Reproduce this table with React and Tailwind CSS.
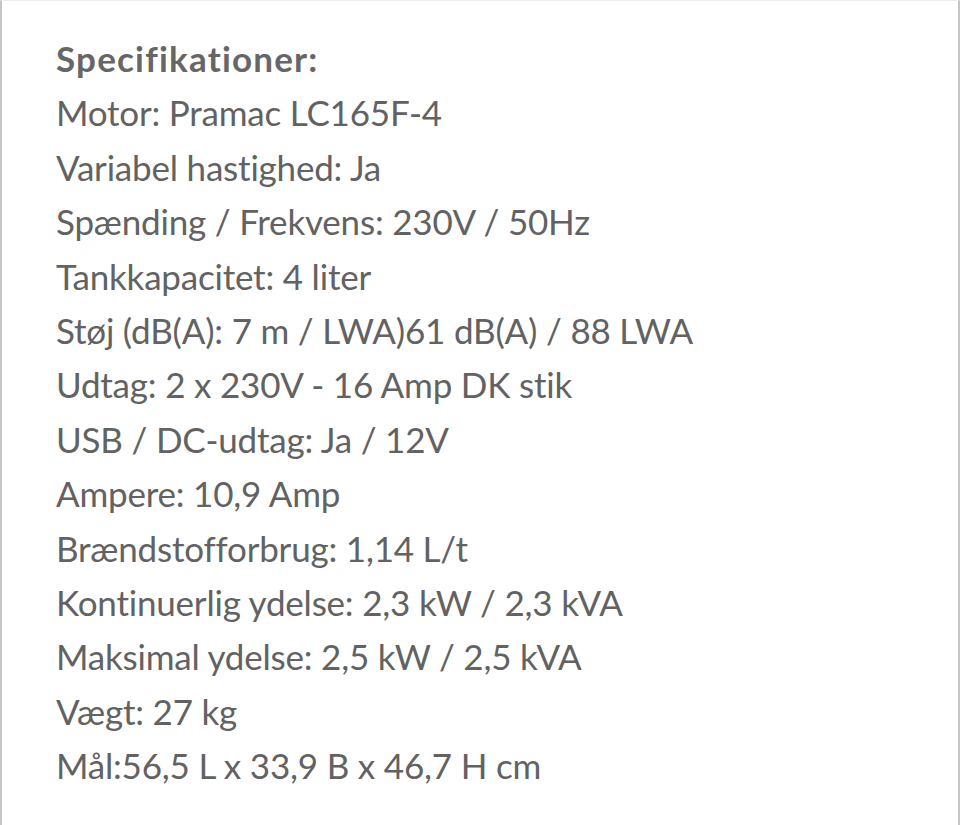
import React from 'react';

const specs = [
  'Motor: Pramac LC165F-4',
  'Variabel hastighed: Ja',
  'Spænding / Frekvens: 230V / 50Hz',
  'Tankkapacitet: 4 liter',
  'Støj (dB(A): 7 m / LWA)61 dB(A) / 88 LWA',
  'Udtag: 2 x 230V - 16 Amp DK stik',
  'USB / DC-udtag: Ja / 12V',
  'Ampere: 10,9 Amp',
  'Brændstofforbrug: 1,14 L/t',
  'Kontinuerlig ydelse: 2,3 kW / 2,3 kVA',
  'Maksimal ydelse: 2,5 kW / 2,5 kVA',
  'Vægt: 27 kg',
  'Mål:56,5 L x 33,9 B x 46,7 H cm',
];

const App = () => {
  return (
    <div className="w-[960px] h-[825px] bg-white border-t border-t-[#eeeeee] border-l-2 border-l-[#c6c6c6] border-r-2 border-r-[#c6c6c6] overflow-hidden">
      <div className="pl-[54px] pt-[30px] font-['Lato',sans-serif] text-[35px] tracking-[-0.2px] leading-[54.4px] text-[#626262]">
        <p className="font-bold tracking-[1.2px] text-[#666666]">Specifikationer:</p>
        {specs.map((line, i) => (
          <p key={i}>{line}</p>
        ))}
      </div>
    </div>
  );
};

export default App;
